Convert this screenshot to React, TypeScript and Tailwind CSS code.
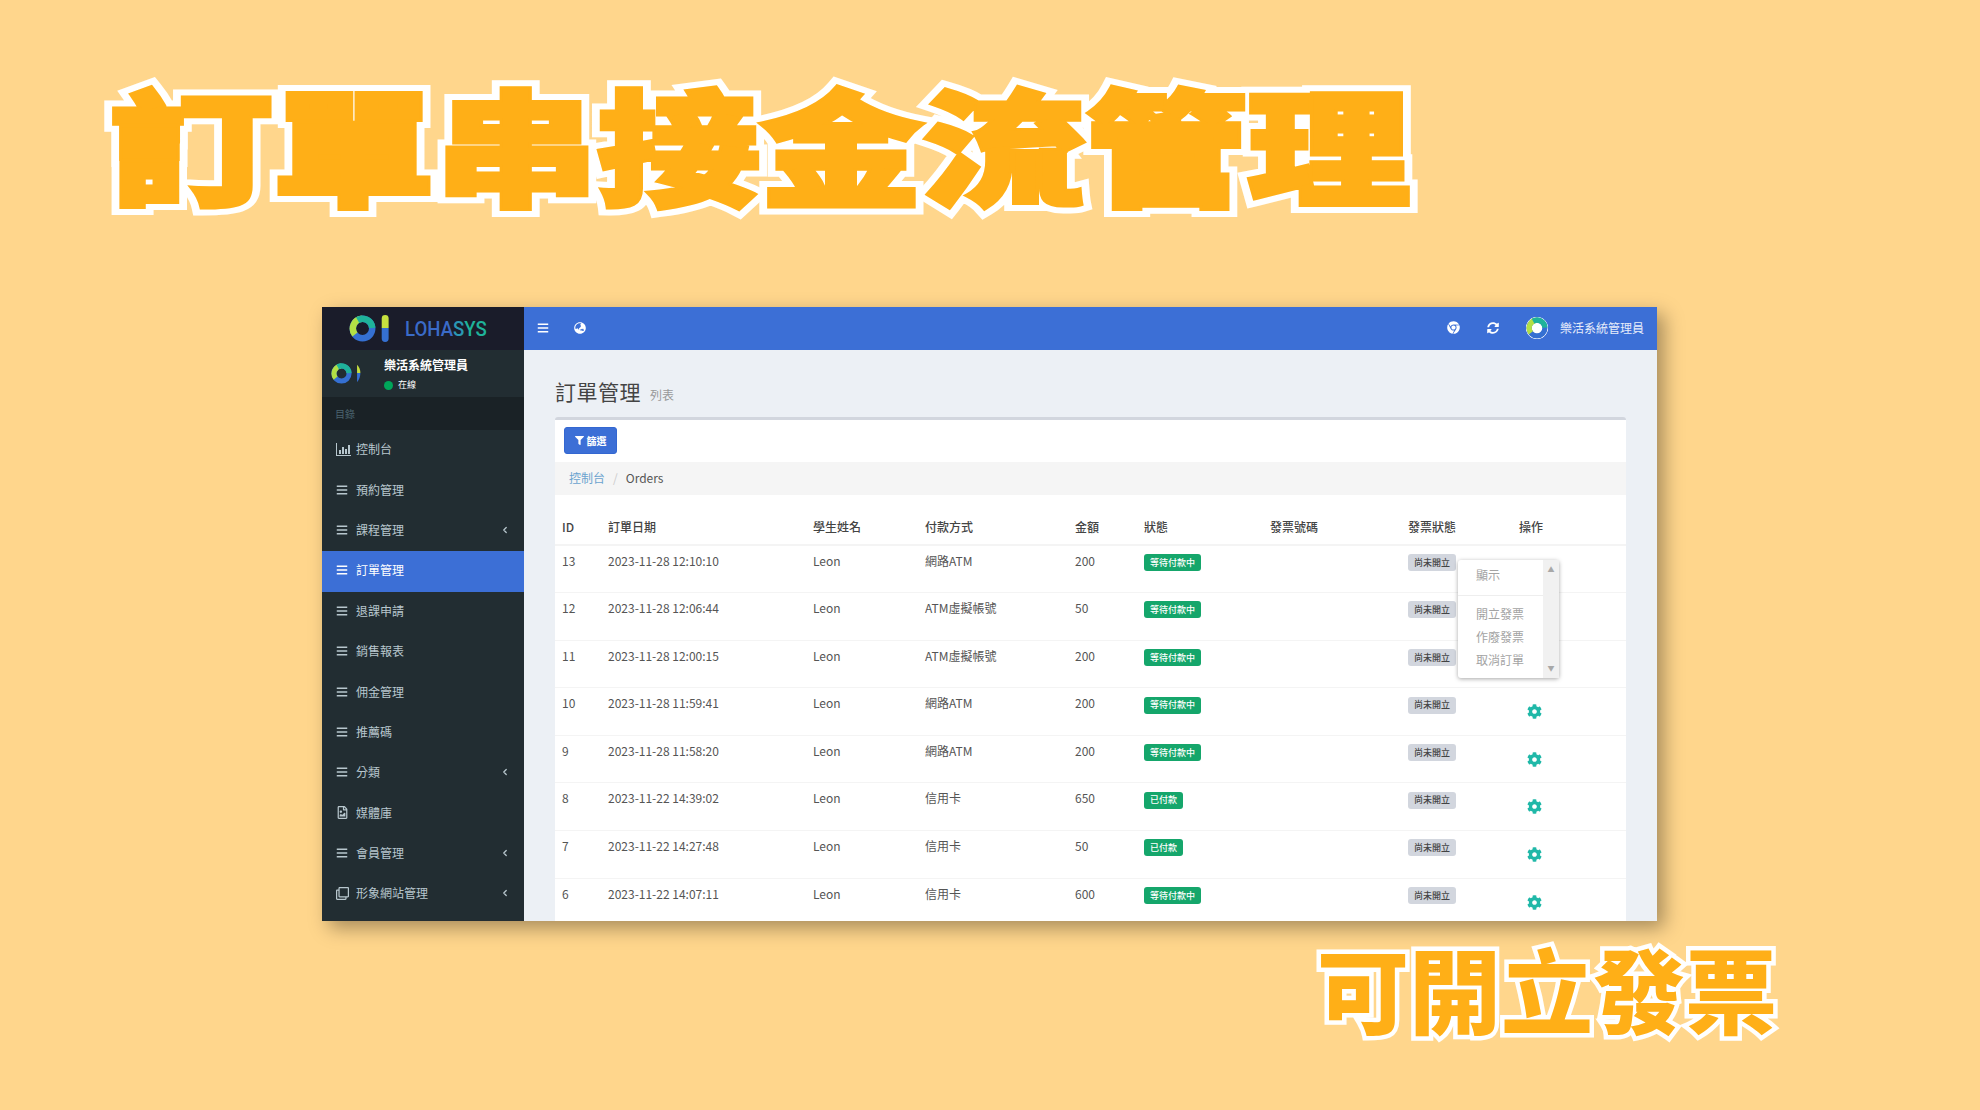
import { ChevronLeft } from "lucide-react";
import {
  FaBars, FaFilter, FaCog, FaGlobeAsia, FaChrome, FaSyncAlt, FaRegClone, FaRegFileImage,
} from "react-icons/fa";

const FONT = "[font-family:'Noto_Sans_CJK_TC','Noto_Sans',sans-serif]";

function Logo({ size, white, thin }: { size: number; white?: boolean; thin?: boolean }) {
  return (
    <svg width={white ? size : size * 1.48} height={size} viewBox={white ? "0 0 25 25" : "0 0 37 25"}>
      {white && <circle cx="12.5" cy="12.5" r="12.5" fill="#fff" />}
      <circle cx="12.5" cy="12.5" r="9" fill="none" stroke="#3570d2" strokeWidth="6" />
      <path d="M5.5 18A9 9 0 0 1 12 3.5" fill="none" stroke="#b3e045" strokeWidth="6" />
      <path d="M8 4.7A9 9 0 0 1 21.5 12" fill="none" stroke="#1fb39a" strokeWidth="6" />
      {!white && !thin && <path d="M33.5 0a3.2 3.2 0 0 1 3.2 3.2V12h-6.4V3.2A3.2 3.2 0 0 1 33.5 0z" fill="#c6e03f" />}
      {!white && !thin && <path d="M30.300 12h6.400v9.800a3.200 3.200 0 0 1-6.400 0z" fill="#3570d2" />}
      {!white && thin && <path d="M31 2q4 4 4 10H31z" fill="#c6e03f" />}
      {!white && thin && <path d="M31 12h4q0 6-4 11z" fill="#3570d2" />}
    </svg>
  );
}

function BarChartIcon() {
  return (
    <svg width="15" height="13" viewBox="0 0 15 13" fill="currentColor">
      <path d="M0 0h1v12h14v1H0z" />
      <path d="M3 7h2v4H3zM6 4h2v7H6zM9 6h2v5H9zM12 2h2v9h-2z" />
    </svg>
  );
}

const MENU = [
  { label: "控制台", icon: "chart" },
  { label: "預約管理" },
  { label: "課程管理", arrow: true },
  { label: "訂單管理", active: true },
  { label: "退課申請" },
  { label: "銷售報表" },
  { label: "佣金管理" },
  { label: "推薦碼" },
  { label: "分類", arrow: true },
  { label: "媒體庫", icon: "image" },
  { label: "會員管理", arrow: true },
  { label: "形象網站管理", icon: "clone", arrow: true },
];

const ORDERS = [
  { id: 13, date: "2023-11-28 12:10:10", pay: "網路ATM", amount: 200, paid: false, menu: true },
  { id: 12, date: "2023-11-28 12:06:44", pay: "ATM虛擬帳號", amount: 50, paid: false, menu: true },
  { id: 11, date: "2023-11-28 12:00:15", pay: "ATM虛擬帳號", amount: 200, paid: false, menu: true },
  { id: 10, date: "2023-11-28 11:59:41", pay: "網路ATM", amount: 200, paid: false },
  { id: 9, date: "2023-11-28 11:58:20", pay: "網路ATM", amount: 200, paid: false },
  { id: 8, date: "2023-11-22 14:39:02", pay: "信用卡", amount: 650, paid: true },
  { id: 7, date: "2023-11-22 14:27:48", pay: "信用卡", amount: 50, paid: true },
  { id: 6, date: "2023-11-22 14:07:11", pay: "信用卡", amount: 600, paid: false },
];

function MenuIcon({ name }: { name?: string }) {
  if (name === "chart") return <BarChartIcon />;
  if (name === "image") return <FaRegFileImage size={13} />;
  if (name === "clone") return <FaRegClone size={13} />;
  return <FaBars size={12} />;
}

function Sidebar() {
  return (
    <aside className="w-[202px] shrink-0 bg-[#222d32] text-[#b8c7ce]">
      <div className="flex h-[43px] items-center bg-[#1a1c2a] pl-[27px]">
        <Logo size={27} />
        <span className="ml-[16px] origin-left whitespace-nowrap [font-family:'Roboto',sans-serif] text-[20px] font-medium leading-none [transform:scaleX(0.93)]">
          <span className="text-[#3a6bc8]">LOHA</span>
          <span className="text-[#2a98b4]">S</span>
          <span className="text-[#1fb39a]">YS</span>
        </span>
      </div>
      <div className="flex h-[47px] items-center pl-[9px]">
        <Logo size={21} thin />
        <div className="ml-[22px]">
          <div className="mt-[1px] text-[12px] font-bold leading-[16px] text-white">樂活系統管理員</div>
          <div className="mt-[6px] flex items-center gap-[5px] text-[9px] leading-[12px] text-white">
            <span className="h-[9px] w-[9px] rounded-full bg-[#00a65a]" />
            在線
          </div>
        </div>
      </div>
      <div className="flex h-[33px] items-center bg-[#1a2226] pb-[1px] pl-[13px] text-[10px] text-[#4b646f]">目錄</div>
      <nav>
        {MENU.map((item) => (
          <div
            key={item.label}
            className={`flex h-[40.4px] items-center pb-[2px] pl-[14px] pr-[14px] text-[12px] ${
              item.active ? "bg-[#3c6fd6] text-white" : ""
            }`}
          >
            <span className="flex w-[20px] shrink-0">
              <MenuIcon name={item.icon} />
            </span>
            <span className="flex-1">{item.label}</span>
            {item.arrow && <ChevronLeft size={10} strokeWidth={3} />}
          </div>
        ))}
      </nav>
    </aside>
  );
}

function TopBar() {
  return (
    <header className="flex h-[43px] items-center bg-[#3c6fd6] pb-[2px] pl-[13px] pr-[13px] text-white">
      <FaBars size={12} />
      <FaGlobeAsia size={12} className="ml-[25px]" />
      <FaChrome size={13} className="ml-auto mr-[2px]" />
      <FaSyncAlt size={12} className="ml-[25px] mr-[2px]" />
      <span className="ml-[25px] mr-[2px] flex h-[22px] w-[22px] items-center justify-center overflow-hidden rounded-full bg-white">
        <Logo size={22} white />
      </span>
      <span className="ml-[10px] text-[12px] text-[#e6ecfa]">樂活系統管理員</span>
    </header>
  );
}

function Badge({ paid }: { paid: boolean }) {
  return (
    <span className="inline-flex h-[17px] items-center rounded-[3px] bg-[#15a66b] px-[6px] text-[9px] font-medium text-white">
      {paid ? "已付款" : "等待付款中"}
    </span>
  );
}

function ActionMenu() {
  return (
    <div className="absolute left-[-54px] top-[14px] z-10 flex h-[118px] w-[101px] rounded-[3px] bg-white text-[12px] text-[#a3a3a3] shadow-[0_1px_4px_rgba(0,0,0,0.35)]">
      <div className="flex-1">
        <div className="flex h-[36px] items-center border-b border-[#eeeeee] pb-[6px] pl-[18px]">顯示</div>
        <div className="mt-[6px] flex h-[23px] items-center pl-[18px]">開立發票</div>
        <div className="flex h-[23px] items-center pl-[18px]">作廢發票</div>
        <div className="flex h-[23px] items-center pl-[18px]">取消訂單</div>
      </div>
      <div className="flex w-[16px] flex-col items-center justify-between bg-[#f1f1f1] py-[6px] text-[7px] leading-none text-[#a8a8a8]">
        <span>▲</span>
        <span>▼</span>
      </div>
    </div>
  );
}

function OrdersTable() {
  return (
    <table className="w-full table-fixed text-left text-[12px] text-[#555555]">
      <colgroup>
        <col className="w-[46px]" />
        <col className="w-[205px]" />
        <col className="w-[112px]" />
        <col className="w-[150px]" />
        <col className="w-[69px]" />
        <col className="w-[126px]" />
        <col className="w-[138px]" />
        <col className="w-[111px]" />
        <col />
      </colgroup>
      <thead>
        <tr className="h-[50px] border-b-2 border-[#f4f4f4] text-[#444444]">
          {["ID", "訂單日期", "學生姓名", "付款方式", "金額", "狀態", "發票號碼", "發票狀態", "操作"].map((h) => (
            <th key={h} className="px-[7px] pt-[14px] font-medium">{h}</th>
          ))}
        </tr>
      </thead>
      <tbody>
        {ORDERS.map((o, i) => (
          <tr key={o.id} className="h-[47.6px] border-b border-[#f4f4f4] align-top">
            <td className="px-[7px] pt-[6px]">{o.id}</td>
            <td className="px-[7px] pt-[6px]">{o.date}</td>
            <td className="px-[7px] pt-[6px]">Leon</td>
            <td className="px-[7px] pt-[6px]">{o.pay}</td>
            <td className="px-[7px] pt-[6px]">{o.amount}</td>
            <td className="px-[7px] pt-[6px]"><Badge paid={o.paid} /></td>
            <td />
            <td className="px-[7px] pt-[6px]">
              <span className="inline-flex h-[17px] items-center rounded-[3px] bg-[#d2d6de] px-[6px] text-[9px] font-medium text-[#444444]">尚未開立</span>
            </td>
            <td className="relative px-[7px] pt-[16px]">
              {!o.menu && <FaCog size={15} className="ml-[8px] text-[#20b8a8]" />}
              {i === 0 && <ActionMenu />}
            </td>
          </tr>
        ))}
      </tbody>
    </table>
  );
}

function Content() {
  return (
    <main className="flex-1 overflow-hidden bg-[#ecf0f5] px-[31px]">
      <div className="flex h-[67px] items-baseline pt-[26px]">
        <h1 className="text-[21px] font-normal tracking-[0.5px] text-[#444444]">訂單管理</h1>
        <span className="ml-[9px] text-[12px] text-[#999999]">列表</span>
      </div>
      <div className="rounded-t-[3px] border-t-[3px] border-[#d2d6de] bg-white">
        <div className="flex h-[42px] items-center pb-[2px] pl-[9px]">
          <span className="flex h-[27px] w-[53px] items-center justify-center gap-[3px] rounded-[3px] border border-[#3367d1] bg-[#3c6fd6] text-[10px] font-bold text-white">
            <FaFilter size={9} />
            篩選
          </span>
        </div>
        <div className="flex h-[33px] items-center bg-[#f5f5f5] pb-[2px] pl-[14px] text-[12px]">
          <span className="text-[#6aa3cf]">控制台</span>
          <span className="mx-[8px] text-[#cccccc]">/</span>
          <span className="text-[#555555]">Orders</span>
        </div>
        <OrdersTable />
      </div>
    </main>
  );
}

export default function App() {
  return (
    <div className={`${FONT} h-[1110px] w-[1980px] overflow-hidden bg-[#ffd68c]`}>
      <div className="h-[307px] pl-[110px] pt-[72px]">
        <h1
          data-text="訂單串接金流管理"
          className="relative inline-block origin-left whitespace-nowrap text-[125px] font-black leading-[140px] text-[#ffaf17] [-webkit-text-stroke:17px_#ffffff] [paint-order:stroke_fill] [transform:scaleX(1.3)] before:absolute before:left-0 before:top-0 before:content-[attr(data-text)] before:[-webkit-text-stroke:5px_#ffaf17]"
        >
          訂單串接金流管理
        </h1>
      </div>
      <div className="ml-[322px] flex h-[614px] w-[1335px] overflow-hidden shadow-[7px_7px_18px_rgba(0,0,0,0.35)]">
        <Sidebar />
        <div className="flex min-w-0 flex-1 flex-col">
          <TopBar />
          <Content />
        </div>
      </div>
      <div className="flex justify-end pr-[203px] pt-[11px]">
        <div className="whitespace-nowrap text-[92px] font-black leading-[110px] text-[#ffaf17] [-webkit-text-stroke:9px_#ffffff] [paint-order:stroke_fill]">
          可開立發票
        </div>
      </div>
    </div>
  );
}
